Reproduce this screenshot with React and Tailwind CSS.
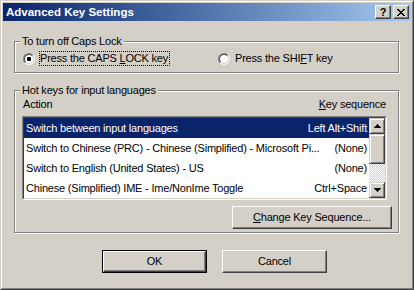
const Raised = ({ className = "", children }) => (
  <div
    className={`flex items-center justify-center border border-t-white border-l-white border-b-[#404040] border-r-[#404040] bg-[#d4d0c8] shadow-[inset_-1px_-1px_0_#808080] ${className}`}
  >
    {children}
  </div>
);

const ScrollBtn = ({ className = "", children }) => (
  <div
    className={`flex items-center justify-center border border-t-[#d4d0c8] border-l-[#d4d0c8] border-b-[#404040] border-r-[#404040] bg-[#d4d0c8] shadow-[inset_1px_1px_0_#fff,inset_-1px_-1px_0_#808080] ${className}`}
  >
    {children}
  </div>
);

const Radio = ({ checked }) => (
  <div className="flex h-[12px] w-[12px] shrink-0 rounded-full border border-t-[#808080] border-l-[#808080] border-b-white border-r-white">
    <div className="flex flex-1 items-center justify-center rounded-full border border-t-[#404040] border-l-[#404040] border-b-[#d4d0c8] border-r-[#d4d0c8] bg-white">
      {checked && <div className="h-[4px] w-[4px] rounded-[1px] bg-black" />}
    </div>
  </div>
);

const GroupBox = ({ label, className = "", children }) => (
  <div
    className={`relative border border-[#808080] shadow-[inset_1px_1px_0_#fff,1px_1px_0_#fff] ${className}`}
  >
    <span className="absolute -top-[7px] left-[5px] bg-[#d4d0c8] px-[2px] leading-[13px]">
      {label}
    </span>
    {children}
  </div>
);

const rows = [
  { action: "Switch between input languages", keys: "Left Alt+Shift", selected: true },
  { action: "Switch to Chinese (PRC) - Chinese (Simplified) - Microsoft Pi...", keys: "(None)" },
  { action: "Switch to English (United States) - US", keys: "(None)" },
  { action: "Chinese (Simplified) IME - Ime/NonIme Toggle", keys: "Ctrl+Space" },
];

const App = () => {
  return (
    <div className="h-[290px] w-[414px] border border-t-[#d4d0c8] border-l-[#d4d0c8] border-b-[#404040] border-r-[#404040] bg-[#d4d0c8] font-['Liberation_Sans',Arial,sans-serif] text-[11px] tracking-[-0.2px] text-black">
      <div className="flex h-full flex-col border border-t-white border-l-white border-b-[#808080] border-r-[#808080] p-[1px]">
        {/* title bar */}
        <div className="flex h-[18px] shrink-0 items-center justify-between bg-linear-to-r from-[#0a246a] to-[#a6caf0] pl-[3px] pr-[2px]">
          <span className="text-[11.5px] font-bold leading-[14px] tracking-normal text-white">Advanced Key Settings</span>
          <div className="flex gap-[2px]">
            <Raised className="h-[14px] w-[16px]">
              <span className="text-[11px] font-bold leading-[11px]">?</span>
            </Raised>
            <Raised className="h-[14px] w-[16px]">
              <svg width="8" height="7" viewBox="0 0 8 7" shapeRendering="crispEdges">
                <path
                  fill="#000"
                  d="M0 0h2v1H0z M6 0h2v1H6z M1 1h2v1H1z M5 1h2v1H5z M2 2h4v1H2z M3 3h2v1H3z M2 4h4v1H2z M1 5h2v1H1z M5 5h2v1H5z M0 6h2v1H0z M6 6h2v1H6z"
                />
              </svg>
            </Raised>
          </div>
        </div>

        {/* body */}
        <div className="flex flex-col pl-[11px]">
          <GroupBox label="To turn off Caps Lock" className="mt-[20px] w-[385px]">
            <div className="flex items-center pb-[6px] pl-[8px] pt-[9px]">
              <div className="flex w-[195px] items-center">
                <Radio checked />
                <span className="ml-[4px] border border-dotted border-black pr-[1px] leading-[13px]">
                  Press the CAPS <u>L</u>OCK key
                </span>
              </div>
              <div className="flex items-center">
                <Radio />
                <span className="ml-[5px] leading-[13px]">
                  Press the SHI<u>F</u>T key
                </span>
              </div>
            </div>
          </GroupBox>

          <GroupBox label="Hot keys for input languages" className="mt-[17px] w-[385px]">
            <div className="flex flex-col px-[7px] pb-[3px] pt-[7px]">
              <div className="flex w-[365px] justify-between pl-[1px] pr-[1px] leading-[13px]">
                <span>Action</span>
                <span>
                  <u>K</u>ey sequence
                </span>
              </div>

              <div className="mt-[5px] w-[365px] border border-t-[#808080] border-l-[#808080] border-b-white border-r-white">
                <div className="flex h-[82px] border border-t-[#404040] border-l-[#404040] border-b-[#d4d0c8] border-r-[#d4d0c8] bg-white">
                  <div className="flex min-w-0 flex-1 flex-col">
                    {rows.map((r) => (
                      <div
                        key={r.action}
                        className={`flex h-[20px] items-center justify-between gap-[6px] px-[2px] leading-[13px] ${
                          r.selected ? "bg-[#0a246a] text-white" : ""
                        }`}
                      >
                        <span className="min-w-0 whitespace-nowrap">{r.action}</span>
                        <span className="shrink-0 whitespace-nowrap">{r.keys}</span>
                      </div>
                    ))}
                  </div>
                  <div className="flex w-[16px] shrink-0 flex-col">
                    <ScrollBtn className="h-[16px]">
                      <svg width="7" height="4" viewBox="0 0 7 4" shapeRendering="crispEdges">
                        <path fill="#000" d="M3 0h1v1H3z M2 1h3v1H2z M1 2h5v1H1z M0 3h7v1H0z" />
                      </svg>
                    </ScrollBtn>
                    <ScrollBtn className="h-[30px]" />
                    <div className="flex-1 bg-[repeating-conic-gradient(#fff_0_25%,#d4d0c8_0_50%)] bg-[length:2px_2px]" />
                    <ScrollBtn className="h-[16px]">
                      <svg width="7" height="4" viewBox="0 0 7 4" shapeRendering="crispEdges">
                        <path fill="#000" d="M0 0h7v1H0z M1 1h5v1H1z M2 2h3v1H2z M3 3h1v1H3z" />
                      </svg>
                    </ScrollBtn>
                  </div>
                </div>
              </div>

              <Raised className="mr-[-1px] mt-[6px] h-[23px] w-[160px] self-end">
                <span className="leading-[13px]">
                  <u>C</u>hange Key Sequence...
                </span>
              </Raised>
            </div>
          </GroupBox>

          <div className="mt-[17px] flex gap-[15px] pl-[88px]">
            <div className="h-[23px] w-[105px] border border-black">
              <Raised className="h-full w-full">
                <span className="leading-[13px]">OK</span>
              </Raised>
            </div>
            <Raised className="h-[23px] w-[105px]">
              <span className="leading-[13px]">Cancel</span>
            </Raised>
          </div>
        </div>
      </div>
    </div>
  );
};

export default App;
